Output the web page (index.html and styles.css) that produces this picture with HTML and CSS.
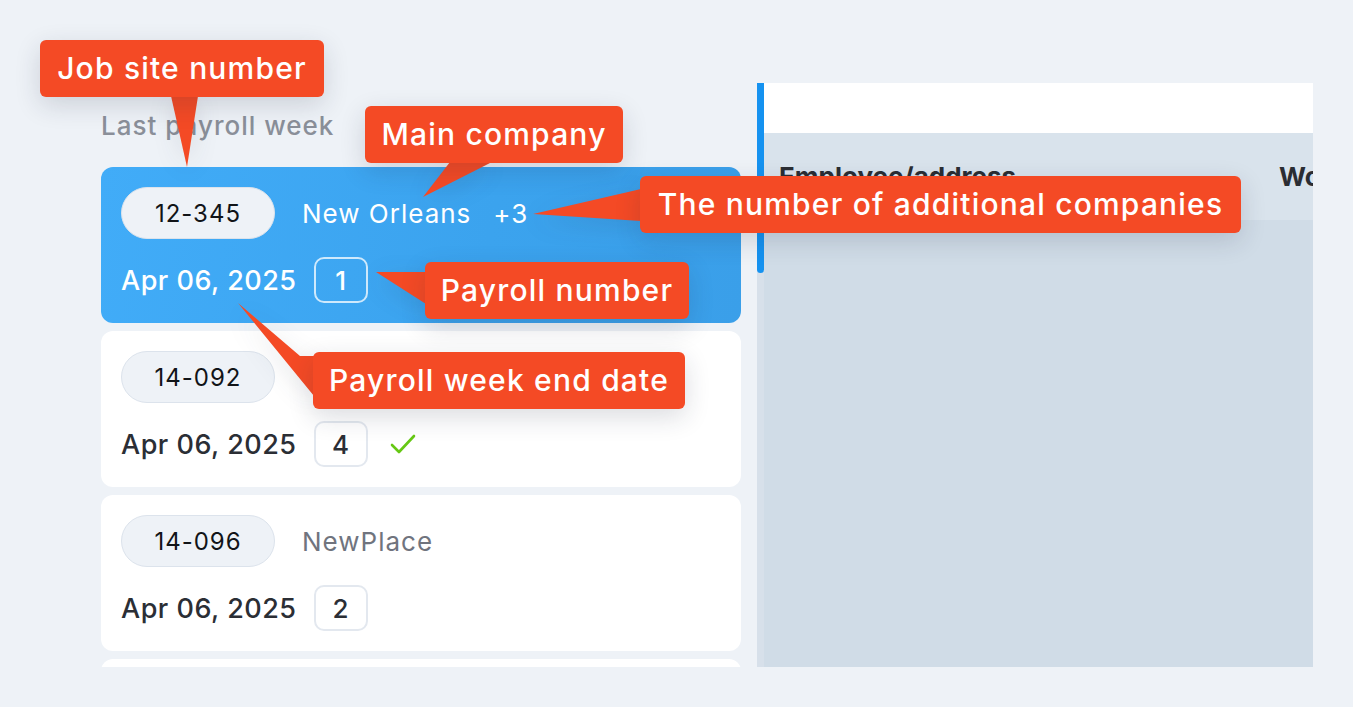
FILE: index.html
```html
<!DOCTYPE html>
<html>
<head>
<meta charset="utf-8">
<link rel="stylesheet" href="styles.css">
</head>
<body>
<div class="page">
  <div class="left">
    <div class="title">Last payroll week</div>
    <div class="cards">
      <div class="card active">
        <div class="row1">
          <span class="pill">12-345</span>
          <span class="company">New Orleans</span>
          <span class="extra">+3</span>
        </div>
        <div class="row2">
          <span class="date">Apr 06, 2025</span>
          <span class="num">1</span>
        </div>
      </div>
      <div class="card">
        <div class="row1">
          <span class="pill">14-092</span>
        </div>
        <div class="row2">
          <span class="date">Apr 06, 2025</span>
          <span class="num">4</span>
          <svg class="check" width="26" height="22" viewBox="0 0 26 22"><path d="M2 12 L9 19 L24 3" fill="none" stroke="#66c814" stroke-width="2.6" stroke-linecap="round" stroke-linejoin="round"/></svg>
        </div>
      </div>
      <div class="card">
        <div class="row1">
          <span class="pill">14-096</span>
          <span class="company">NewPlace</span>
        </div>
        <div class="row2">
          <span class="date">Apr 06, 2025</span>
          <span class="num">2</span>
        </div>
      </div>
      <div class="card"></div>
    </div>
  </div>
  <div class="panel">
    <div class="track"><div class="thumb"></div></div>
    <div class="table">
      <div class="tophead"></div>
      <div class="thead">
        <span class="col1">Employee/address</span>
        <span class="col2">Work</span>
      </div>
      <div class="tbody"></div>
    </div>
  </div>

  <svg class="tails" width="1353" height="707" viewBox="0 0 1353 707">
    <polygon points="171,96 198,96 187,167" />
    <polygon points="450,162 492,162 423,197" />
    <polygon points="641,189 641,221 533,214" />
    <polygon points="426,272 426,304 376,272" />
    <polygon points="300,356 314,356 314,396 238,303" />
  </svg>
  <div class="callout c1">Job site number</div>
  <div class="callout c2">Main company</div>
  <div class="callout c3">The number of additional companies</div>
  <div class="callout c4">Payroll number</div>
  <div class="callout c5">Payroll week end date</div>
</div>
</body>
</html>
```

FILE: styles.css
```css
html, body {
  margin: 0;
  padding: 0;
  background: #eef2f7;
}
.page {
  position: relative;
  width: 1353px;
  height: 707px;
  box-sizing: border-box;
  padding: 83px 40px 40px 101px;
  display: flex;
  gap: 16px;
  font-family: Inter, "Noto Sans", sans-serif;
  overflow: hidden;
}
.left {
  width: 640px;
  height: 584px;
  display: flex;
  flex-direction: column;
  overflow: hidden;
  flex-shrink: 0;
}
.title {
  margin: 27px 0 25px;
  font-size: 26px;
  letter-spacing: 1px;
  line-height: 32px;
  font-weight: 500;
  color: #8a8f99;
}
.cards {
  display: flex;
  flex-direction: column;
  gap: 8px;
}
.card {
  height: 156px;
  flex-shrink: 0;
  box-sizing: border-box;
  padding: 20px 20px;
  background: #ffffff;
  border-radius: 12px;
  display: flex;
  flex-direction: column;
  gap: 18px;
}
.card.active {
  background: linear-gradient(100deg, #41acf8 0%, #3ba3ee 60%, #3a9fe9 100%);
}
.row1 {
  height: 52px;
  display: flex;
  align-items: center;
}
.pill {
  width: 154px;
  height: 52px;
  box-sizing: border-box;
  border-radius: 26px;
  background: #eef2f7;
  border: 1.5px solid #dce3ec;
  display: flex;
  align-items: center;
  justify-content: center;
  font-size: 24px;
  letter-spacing: 1px;
  color: #111418;
}
.company {
  margin-left: 27px;
  font-size: 26px;
  letter-spacing: 1px;
  color: #70747e;
}
.extra {
  margin-left: 22px;
  font-size: 26px;
  letter-spacing: 1px;
  color: #ffffff;
}
.active .company {
  color: #ffffff;
}
.row2 {
  height: 46px;
  display: flex;
  align-items: center;
}
.date {
  font-size: 27px;
  letter-spacing: 0.5px;
  font-weight: 500;
  color: #2b2e35;
}
.active .date {
  color: #ffffff;
}
.num {
  margin-left: 17px;
  width: 54px;
  height: 46px;
  box-sizing: border-box;
  border: 2px solid #e3e8ef;
  border-radius: 10px;
  display: flex;
  align-items: center;
  justify-content: center;
  font-size: 26px;
  font-weight: 500;
  color: #2b2e35;
}
.active .num {
  color: #ffffff;
  border-color: rgba(255, 255, 255, 0.75);
}
.check {
  margin-left: 22px;
}
.panel {
  width: 556px;
  height: 584px;
  display: flex;
  flex-shrink: 0;
}
.track {
  width: 7px;
  background: #d7e0ea;
}
.thumb {
  height: 190px;
  background: #1592f0;
  border-radius: 0 0 4px 4px;
}
.table {
  flex: 1;
  display: flex;
  flex-direction: column;
  overflow: hidden;
}
.tophead {
  height: 50px;
  background: #ffffff;
  flex-shrink: 0;
}
.thead {
  height: 87px;
  flex-shrink: 0;
  background: #d9e3ec;
  display: flex;
  align-items: center;
  padding-left: 15px;
  font-size: 26px;
  font-weight: 700;
  color: #2a2d33;
  white-space: nowrap;
}
.col1 {
  width: 500px;
  flex-shrink: 0;
}
.tbody {
  flex: 1;
  background: #d0dce7;
}
.tails {
  position: absolute;
  left: 0;
  top: 0;
  fill: #f44a25;
  filter: drop-shadow(0 6px 12px rgba(30, 40, 60, 0.12));
}
.callout {
  position: absolute;
  height: 57px;
  box-sizing: border-box;
  padding: 0 10px;
  background: #f44a25;
  border-radius: 6px;
  color: #ffffff;
  font-size: 30px;
  letter-spacing: 1.2px;
  font-weight: 500;
  line-height: 57px;
  white-space: nowrap;
  text-align: center;
  box-shadow: 0 8px 26px rgba(30, 40, 60, 0.16);
}
.c1 { left: 40px; top: 40px; width: 284px; }
.c2 { left: 365px; top: 106px; width: 258px; }
.c3 { left: 640px; top: 176px; width: 601px; }
.c4 { left: 425px; top: 262px; width: 264px; }
.c5 { left: 313px; top: 352px; width: 372px; }
```
